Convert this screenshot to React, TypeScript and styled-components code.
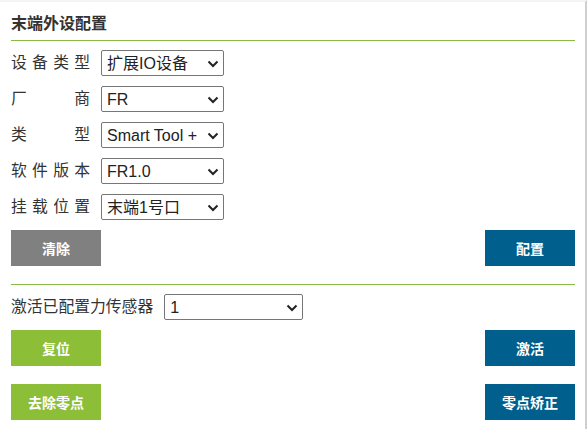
import styled, { createGlobalStyle } from 'styled-components';

const GlobalStyle = createGlobalStyle`
  html, body {
    margin: 0;
    padding: 0;
    background: #fff;
  }
  body {
    font-family: "Liberation Sans", "Noto Sans CJK SC", sans-serif;
    color: #333;
  }
`

interface FieldProps {
  label: string,
  value: string,
  options?: string[]
}

const fields: FieldProps[] = [
  {label: '设备类型', value: '扩展IO设备', options: ['扩展IO设备', '力传感器']},
  {label: '厂商', value: 'FR'},
  {label: '类型', value: 'Smart Tool + IO'},
  {label: '软件版本', value: 'FR1.0'},
  {label: '挂载位置', value: '末端1号口', options: ['末端1号口', '末端2号口']},
]

interface DropdownProps {
  value: string,
  options: string[],
  width: number
}

function Dropdown({value, options, width}: DropdownProps) {
  return (
    <SelectWrap width={width}>
      <Select defaultValue={value}>
        {options.map((opt) => <option key={opt} value={opt}>{opt}</option>)}
      </Select>
      <Chevron viewBox="0 0 12 8" aria-hidden>
        <polyline points="1.5,1.5 6,6 10.5,1.5" />
      </Chevron>
    </SelectWrap>
  )
}

function Field({label, value, options}: FieldProps) {
  return (
    <Row>
      <Label justify>{label}</Label>
      <Dropdown value={value} options={options ?? [value]} width={123} />
    </Row>
  )
}

export default function App() {
  return (
    <>
      <GlobalStyle />
      <Page>
        <Panel>
          <Title>末端外设配置</Title>
          <Fields>
            {fields.map((field) => <Field key={field.label} {...field} />)}
          </Fields>
          <ButtonRow>
            <Button tone="grey">清除</Button>
            <Button tone="blue">配置</Button>
          </ButtonRow>
          <Divider />
          <Row>
            <Label>激活已配置力传感器</Label>
            <Dropdown value="1" options={['1', '2']} width={139} />
          </Row>
          <ButtonRow>
            <Button tone="green">复位</Button>
            <Button tone="blue">激活</Button>
          </ButtonRow>
          <ButtonRow spaced>
            <Button tone="green">去除零点</Button>
            <Button tone="blue">零点矫正</Button>
          </ButtonRow>
        </Panel>
      </Page>
    </>
  )
}

const Page = styled.div`
  width: 587px;
  height: 429px;
  box-sizing: border-box;
  border-top: 2px solid #f4f4f4;
  border-right: 2px solid #cfcfcf;
  overflow: hidden;
`

const Panel = styled.div`
  padding: 0 10px 0 11px;
`

const Title = styled.h2`
  margin: 0;
  padding: 12px 0 6px;
  font-size: 16px;
  line-height: 20px;
  font-weight: bold;
  color: #333;
  border-bottom: 1px solid #8cb84a;
`

const Fields = styled.div`
  display: flex;
  flex-direction: column;
  gap: 10px;
  margin-top: 9px;
`

const Row = styled.div`
  display: flex;
  align-items: center;
  height: 26px;
  gap: 11px;
`

const Label = styled.span<{justify?: boolean}>`
  font-size: 15.8px;
  line-height: 20px;
  color: #333;
  white-space: nowrap;
  ${({justify}) => justify && `
    width: 79px;
    text-align: justify;
    text-align-last: justify;
  `}
`

const SelectWrap = styled.div<{width: number}>`
  position: relative;
  width: ${({width}) => width}px;
  height: 26px;
`

const Select = styled.select`
  appearance: none;
  width: 100%;
  height: 100%;
  box-sizing: border-box;
  border: 1px solid #767676;
  border-radius: 2px;
  background: #fff;
  color: #222;
  font-family: "Liberation Sans", "Noto Sans CJK SC", sans-serif;
  font-size: 16px;
  padding: 0 24px 0 5px;
  outline: none;
`

const Chevron = styled.svg`
  position: absolute;
  right: 5px;
  top: 10px;
  width: 12px;
  height: 8px;
  fill: none;
  stroke: #222;
  stroke-width: 2;
  pointer-events: none;
`

const ButtonRow = styled.div<{spaced?: boolean}>`
  display: flex;
  justify-content: space-between;
  margin-top: ${({spaced}) => spaced ? 18 : 10}px;
`

const tones = {
  grey: '#808080',
  blue: '#005f8c',
  green: '#8dbe38',
}

const Button = styled.button<{tone: keyof typeof tones}>`
  width: 90px;
  height: 36px;
  border: none;
  padding: 0;
  background: ${({tone}) => tones[tone]};
  color: #fff;
  font-family: "Liberation Sans", "Noto Sans CJK SC", sans-serif;
  font-size: 14px;
  font-weight: bold;
  cursor: pointer;
`

const Divider = styled.hr`
  border: none;
  border-top: 1px solid #8cb84a;
  margin: 18px 0 9px;
`
